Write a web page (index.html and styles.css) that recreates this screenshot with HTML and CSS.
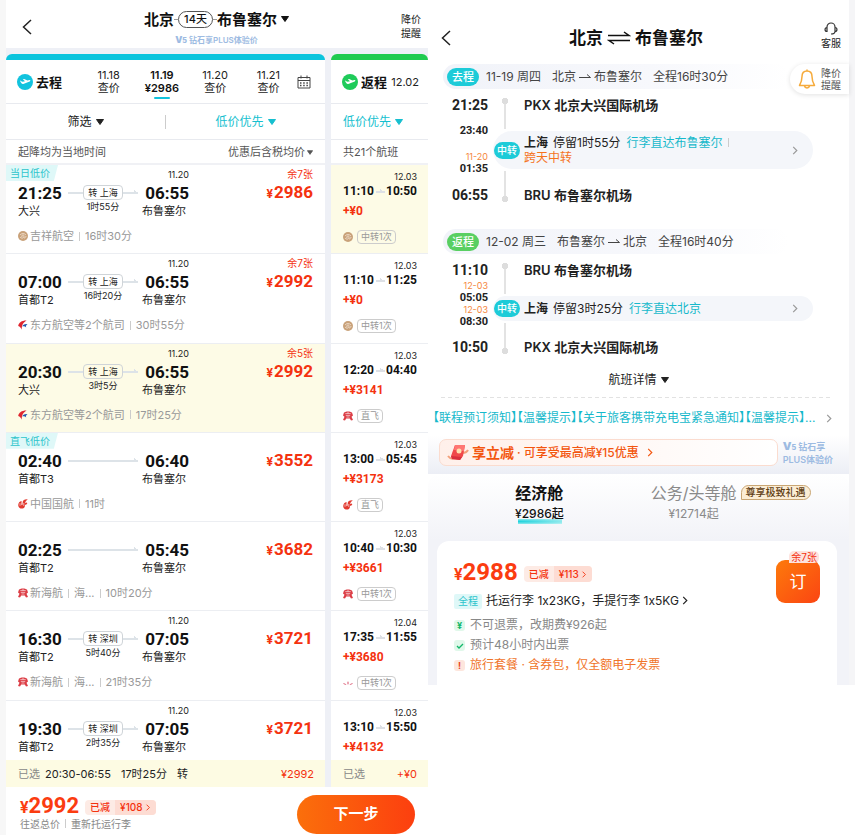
FILE: index.html
```
<!DOCTYPE html>
<html lang="zh-CN">
<head>
  <meta charset="UTF-8">
  <meta name="viewport" content="width=device-width, initial-scale=1.0">
  <title>北京-布鲁塞尔</title>
  <link rel="stylesheet" href="styles.css">
</head>
<body>
  <svg class="sprite" aria-hidden="true">
    <symbol id="juneyao" viewBox="0 0 10 10"><circle cx="5" cy="5" r="5" fill="#c9a27a"/><path d="M2 4c2-2 4-2 6 0M2 6c2 2 4 1 4-1S3 4 4 6M6 7c1 0 2-1 2-2" fill="none" stroke="#f6e9da" stroke-width=".8"/></symbol>
    <symbol id="ceair" viewBox="0 0 10 10"><path d="M8.600 .6C4 .4 .8 2.600 .2 6 2 6.600 3 8 4 9.800 3.400 6.200 4.500 3.200 8.600 .6z" fill="#e0262f"/><path d="M9.600 4C6.500 3.600 4.800 4.600 4.300 6.600 6 6 7 6.300 8.200 7.600 7.600 6.200 8 5 9.600 4z" fill="#2558ad"/></symbol>
    <symbol id="airchina" viewBox="0 0 10 10"><path d="M9.800 .2C6 0 4.400 1.400 4.600 4.600 4.600 6.400 3.600 6.600 3.400 5.400L3.600 2C1.600 2.200 .2 4 .2 6.200.4 8.800 2.600 10 4.800 9.500 6.800 9 7 7.200 7 6L9.200 5 9 3.600 7.200 4C7.200 2.600 8.200 1.600 9.800 .2z" fill="#e23a30"/><path d="M2 4.200v2.600M5.800 4v3" stroke="#fff" stroke-width=".6"/></symbol>
    <symbol id="hna" viewBox="0 0 10 10"><path d="M1 1.500C3 0 7 0 9 1.500L10 4.500 8.500 5.800 10 9 8 9.600 6.800 7.500H3.200L2 9.600 0 9 1.500 5.800 0 4.500z" fill="#dc3d45"/><path d="M2.300 2.600h5.400M2.800 4.400h4.400M3.500 6h3M5 1v1.500" stroke="#fff" stroke-width=".6"/></symbol>
    <symbol id="lotus" viewBox="0 0 10 10"><path d="M5 3l1 2-1 2-1-2zM0 5c1.500 0 2.500.5 3.500 2C2 7.200 1 6.500 0 5zM10 5c-1.500 0-2.500.5-3.500 2C8 7.200 9 6.500 10 5z" fill="#e58a9c"/></symbol>
    <symbol id="back" viewBox="0 0 10 16"><path d="M9 1L1.500 8 9 15" fill="none" stroke="#222" stroke-width="1.500"/></symbol>
    <symbol id="more" viewBox="0 0 6 10"><path d="M1 1l4 4-4 4" fill="none" stroke="currentColor" stroke-width="1.300"/></symbol>
    <symbol id="down" viewBox="0 0 8 6"><path d="M.5 .5h7L4 5.500z" fill="currentColor" stroke="currentColor" stroke-linejoin="round"/></symbol>
    <symbol id="plane" viewBox="0 0 16 16"><circle cx="8" cy="8" r="8" fill="currentColor"/><path d="M3 6.600c1 .3 1.600 1 2.700 1.200L8 7.300 5.800 5.200l1.300-.3 3.400 1.600 1.900-.5c1.200-.2 1.300 1 .3 1.400L6.300 10c-1.500.4-2.800-1.600-3.300-3.400z" fill="#fff"/></symbol>
  </svg>

  <!-- 航班列表 -->
  <div class="list-page">
    <header class="list-header">
      <button class="icon-btn" aria-label="返回"><svg class="back"><use href="#back"/></svg></button>
      <div class="route">
        <button class="route-title">北京<i class="dash"></i><span class="days">14天</span><i class="dash"></i>布鲁塞尔<svg class="down"><use href="#down"/></svg></button>
        <p class="plus"><b>V<small>5</small></b> 钻石享PLUS体验价</p>
      </div>
      <button class="remind">降价<br>提醒</button>
    </header>

    <div class="columns">
      <section class="col col-go">
        <div class="dates">
          <h2><svg class="plane"><use href="#plane"/></svg>去程</h2>
          <div class="days-tabs">
            <button>11.18<br>查价</button>
            <button class="active">11.19<br>¥2986</button>
            <button>11.20<br>查价</button>
            <button>11.21<br>查价</button>
          </div>
          <button class="icon-btn" aria-label="日历">
            <svg class="calendar" viewBox="0 0 14 14"><path d="M1 2.500h12v10.500H1zM1 5.500h12M4 .5v3M10 .5v3" fill="none" stroke="#444"/><path d="M3 8h8M3 10.500h8" stroke="#444" stroke-width="1.300" stroke-dasharray="1.500 1.700"/></svg>
          </button>
        </div>
        <div class="filters">
          <button>筛选<svg class="down"><use href="#down"/></svg></button>
          <button class="on">低价优先<svg class="down"><use href="#down"/></svg></button>
        </div>
        <div class="notes"><span>起降均为当地时间</span><button>优惠后含税均价<svg class="down"><use href="#down"/></svg></button></div>
        <ul class="flights">
          <li class="flight">
            <span class="tag">当日低价</span>
            <span class="date">11.20</span>
            <b class="time dep">21:25</b>
            <div class="via"><span>转 上海</span><small>1时55分</small></div>
            <b class="time arr">06:55</b>
            <span class="from">大兴</span><span class="to">布鲁塞尔</span>
            <p class="price"><small>余7张</small><b><i>¥</i>2986</b></p>
            <p class="airline"><svg><use href="#juneyao"/></svg>吉祥航空<i class="bar"></i>16时30分</p>
          </li>
          <li class="flight">
            <span class="date">11.20</span>
            <b class="time dep">07:00</b>
            <div class="via"><span>转 上海</span><small>16时20分</small></div>
            <b class="time arr">06:55</b>
            <span class="from">首都T2</span><span class="to">布鲁塞尔</span>
            <p class="price"><small>余7张</small><b><i>¥</i>2992</b></p>
            <p class="airline"><svg><use href="#ceair"/></svg>东方航空等2个航司<i class="bar"></i>30时55分</p>
          </li>
          <li class="flight selected">
            <span class="date">11.20</span>
            <b class="time dep">20:30</b>
            <div class="via"><span>转 上海</span><small>3时5分</small></div>
            <b class="time arr">06:55</b>
            <span class="from">大兴</span><span class="to">布鲁塞尔</span>
            <p class="price"><small>余5张</small><b><i>¥</i>2992</b></p>
            <p class="airline"><svg><use href="#ceair"/></svg>东方航空等2个航司<i class="bar"></i>17时25分</p>
          </li>
          <li class="flight">
            <span class="tag">直飞低价</span>
            <b class="time dep">02:40</b>
            <div class="via"></div>
            <b class="time arr">06:40</b>
            <span class="from">首都T3</span><span class="to">布鲁塞尔</span>
            <p class="price"><b><i>¥</i>3552</b></p>
            <p class="airline"><svg><use href="#airchina"/></svg>中国国航<i class="bar"></i>11时</p>
          </li>
          <li class="flight">
            <b class="time dep">02:25</b>
            <div class="via"></div>
            <b class="time arr">05:45</b>
            <span class="from">首都T2</span><span class="to">布鲁塞尔</span>
            <p class="price"><b><i>¥</i>3682</b></p>
            <p class="airline"><svg><use href="#hna"/></svg>新海航<i class="bar"></i>海...<i class="bar"></i>10时20分</p>
          </li>
          <li class="flight">
            <span class="date">11.20</span>
            <b class="time dep">16:30</b>
            <div class="via"><span>转 深圳</span><small>5时40分</small></div>
            <b class="time arr">07:05</b>
            <span class="from">首都T2</span><span class="to">布鲁塞尔</span>
            <p class="price"><b><i>¥</i>3721</b></p>
            <p class="airline"><svg><use href="#hna"/></svg>新海航<i class="bar"></i>海...<i class="bar"></i>21时35分</p>
          </li>
          <li class="flight">
            <span class="date">11.20</span>
            <b class="time dep">19:30</b>
            <div class="via"><span>转 深圳</span><small>2时35分</small></div>
            <b class="time arr">07:05</b>
            <span class="from">首都T2</span><span class="to">布鲁塞尔</span>
            <p class="price"><b><i>¥</i>3721</b></p>
          </li>
        </ul>
        <div class="chosen"><span>已选</span><b>20:30-06:55</b><b>17时25分</b><b>转</b><em>¥2992</em></div>
      </section>

      <section class="col col-back">
        <div class="dates">
          <h2><svg class="plane"><use href="#plane"/></svg>返程</h2>
          <span class="back-date">12.02</span>
        </div>
        <div class="filters">
          <button class="on">低价优先<svg class="down"><use href="#down"/></svg></button>
        </div>
        <div class="notes"><span>共21个航班</span></div>
        <ul class="flights">
          <li class="return selected">
            <span class="date">12.03</span>
            <div class="times"><b>11:10</b><i></i><b>10:50</b></div>
            <p class="extra">+¥0</p>
            <p class="airline"><svg><use href="#juneyao"/></svg><span>中转1次</span></p>
          </li>
          <li class="return">
            <span class="date">12.03</span>
            <div class="times"><b>11:10</b><i></i><b>11:25</b></div>
            <p class="extra">+¥0</p>
            <p class="airline"><svg><use href="#juneyao"/></svg><span>中转1次</span></p>
          </li>
          <li class="return">
            <span class="date">12.03</span>
            <div class="times"><b>12:20</b><i></i><b>04:40</b></div>
            <p class="extra">+¥3141</p>
            <p class="airline"><svg><use href="#hna"/></svg><span>直飞</span></p>
          </li>
          <li class="return">
            <span class="date">12.03</span>
            <div class="times"><b>13:00</b><i></i><b>05:45</b></div>
            <p class="extra">+¥3173</p>
            <p class="airline"><svg><use href="#airchina"/></svg><span>直飞</span></p>
          </li>
          <li class="return">
            <span class="date">12.03</span>
            <div class="times"><b>10:40</b><i></i><b>10:30</b></div>
            <p class="extra">+¥3661</p>
            <p class="airline"><svg><use href="#hna"/></svg><span>中转1次</span></p>
          </li>
          <li class="return">
            <span class="date">12.04</span>
            <div class="times"><b>17:35</b><i></i><b>11:55</b></div>
            <p class="extra">+¥3680</p>
            <p class="airline"><svg><use href="#lotus"/></svg><span>中转1次</span></p>
          </li>
          <li class="return">
            <span class="date">12.03</span>
            <div class="times"><b>13:10</b><i></i><b>15:50</b></div>
            <p class="extra">+¥4132</p>
          </li>
        </ul>
        <div class="chosen"><span>已选</span><em>+¥0</em></div>
      </section>
    </div>

    <footer class="pay">
      <div>
        <div class="total"><b class="num"><i>¥</i>2992</b><button class="cut"><span>已减</span><span>¥108<svg class="more"><use href="#more"/></svg></span></button></div>
        <p>往返总价<i class="bar"></i>重新托运行李</p>
      </div>
      <button class="next">下一步</button>
    </footer>
  </div>

  <!-- 航班详情 -->
  <div class="detail-page">
    <header class="detail-header">
      <button class="icon-btn" aria-label="返回"><svg class="back"><use href="#back"/></svg></button>
      <h1>北京<svg class="swap" viewBox="0 0 24 14"><path d="M1 4.500h21L17 1M23 9.500H2L7 13" fill="none" stroke="#111" stroke-width="1.500"/></svg>布鲁塞尔</h1>
      <button class="service"><svg viewBox="0 0 14 14"><path d="M3 10V6a4 4 0 0 1 8 0v4M3 6.500c-2.600 0-2.600 4 0 4zM11 6.500c2.600 0 2.600 4 0 4zM11 10.500c0 1.500-1.500 2.500-4 2.500" fill="none" stroke="#333" stroke-width="1.200"/></svg>客服</button>
    </header>
    <button class="bell">
      <svg viewBox="0 0 18 20"><path d="M9 2C5.500 2 4 4.500 4 7.500 4 12 3 14 1.500 16.500h15C15 14 14 12 14 7.500 14 4.500 12.500 2 9 2zM9 .5V2M6.500 17c.5 2.500 4.500 2.500 5 0" fill="none" stroke="#f6ab3c" stroke-width="1.500" stroke-linejoin="round"/></svg>
      <span>降价<br>提醒</span>
    </button>

    <section class="leg">
      <h2 class="leg-title"><span class="badge">去程</span><span>11-19 周四</span><span>北京<svg class="to-arrow" viewBox="0 0 12 6"><path d="M0 4.500h11.500L8 1.500" fill="none" stroke="#444"/></svg>布鲁塞尔</span><span>全程16时30分</span></h2>
      <div class="leg-body">
        <div class="leg-times">
          <b>21:25</b>
          <div class="mid split"><span>23:40</span><em>11-20</em><span>01:35</span></div>
          <b>06:55</b>
        </div>
        <div class="leg-stops">
          <div class="stop"><i class="rail"></i><b>PKX 北京大兴国际机场</b></div>
          <div class="transfer">
            <span class="badge">中转</span>
            <p class="transfer-text"><b>上海</b>停留1时55分<a href="#luggage">行李直达布鲁塞尔</a><i class="bar"></i><br><em>跨天中转</em></p>
            <svg class="more"><use href="#more"/></svg>
          </div>
          <div class="stop last"><i class="rail"></i><b>BRU 布鲁塞尔机场</b></div>
        </div>
      </div>
    </section>

    <section class="leg leg-return">
      <h2 class="leg-title"><span class="badge green">返程</span><span>12-02 周三</span><span>布鲁塞尔<svg class="to-arrow" viewBox="0 0 12 6"><path d="M0 4.500h11.500L8 1.500" fill="none" stroke="#444"/></svg>北京</span><span>全程16时40分</span></h2>
      <div class="leg-body">
        <div class="leg-times">
          <b>11:10</b>
          <div class="mid"><em>12-03</em><span>05:05</span><em>12-03</em><span>08:30</span></div>
          <b>10:50</b>
        </div>
        <div class="leg-stops">
          <div class="stop"><i class="rail"></i><b>BRU 布鲁塞尔机场</b></div>
          <div class="transfer">
            <span class="badge">中转</span>
            <p class="transfer-text"><b>上海</b>停留3时25分<a href="#luggage">行李直达北京</a></p>
            <svg class="more"><use href="#more"/></svg>
          </div>
          <div class="stop last"><i class="rail"></i><b>PKX 北京大兴国际机场</b></div>
        </div>
      </div>
    </section>

    <button class="unfold">航班详情<svg class="down"><use href="#down"/></svg></button>
    <a class="notice" href="#notice"><span>【联程预订须知】【温馨提示】【关于旅客携带充电宝紧急通知】【温馨提示】...</span><svg class="more"><use href="#more"/></svg></a>

    <div class="promo">
      <button class="promo-box">
        <svg class="gift" viewBox="0 0 22 18"><path d="M1 12c3 4 6 3 8 1M15 9c3 0 5-1 6-3" fill="none" stroke="#f3a07a" stroke-width="2"/><path d="M8 1h10l-2 11-3 4-8-1-1-3z" fill="#f0484a"/><path d="M8 1h10l-1 6-10-1z" fill="#ff7773"/><path d="M4 12l11 1-2 3-8-1z" fill="#d92f3c"/><circle cx="12" cy="7" r="2.500" fill="#ffe0b0"/></svg>
        <b>享立减</b><span>·</span><span>可享受最高减¥15优惠</span><svg class="more"><use href="#more"/></svg>
      </button>
      <p class="plus"><b>V<small>5</small></b> 钻石享<br>PLUS体验价</p>
    </div>

    <section class="cabin">
      <div class="tabs">
        <button class="tab active"><b>经济舱</b><span>¥2986起</span></button>
        <button class="tab"><b>公务/头等舱</b><span>¥12714起</span></button>
        <span class="gold">尊享极致礼遇</span>
      </div>
      <div class="card">
        <div class="fare">
          <div class="total"><b class="num"><i>¥</i>2988</b><button class="cut"><span>已减</span><span>¥113<svg class="more"><use href="#more"/></svg></span></button></div>
          <p class="bags"><span class="all">全程</span><a href="#bags">托运行李 1x23KG，手提行李 1x5KG<svg class="more"><use href="#more"/></svg></a></p>
          <p class="rule"><i>¥</i>不可退票，改期费¥926起</p>
          <p class="rule"><i><svg viewBox="0 0 8 8"><path d="M1 4l2 2 4-4" fill="none" stroke="#12b76a" stroke-width="1.300"/></svg></i>预计48小时内出票</p>
          <p class="rule warn"><i>!</i>旅行套餐 · 含券包，仅全额电子发票</p>
        </div>
        <button class="order">订<small>余7张</small></button>
      </div>
    </section>
  </div>
</body>
</html>
```
FILE: styles.css
```
*{
  box-sizing: border-box;
  margin: 0;
  padding: 0;
}
body{
  display: flex;
  align-items: flex-start;
  background: #fff;
  color: #222;
  font: 11px/14px Inter, "Noto Sans CJK SC", sans-serif;
}
button{
  border: 0;
  background: none;
  color: inherit;
  font: inherit;
  cursor: pointer;
}
a{
  color: inherit;
  text-decoration: none;
}
i, em{
  font-style: normal;
}
ul{
  list-style: none;
}
.sprite{
  position: absolute;
  width: 0;
  height: 0;
}
.back{
  display: block;
  width: 10px;
  height: 16px;
}
.down{
  width: 8px;
  height: 6px;
  margin: 0 0 1px 4px;
}
.more{
  width: 6px;
  height: 9px;
  flex: none;
}
.bar{
  display: inline-block;
  width: 1px;
  height: 9px;
  margin: 0 5px;
  background: #ccc;
}
.plus{
  color: #9dbbe2;
  font-size: 9px;
  line-height: 12px;
  font-weight: 600;
}
.plus b{
  font-size: 11px;
}
.plus small{
  font-size: 7px;
}
.num, .time, .times b, .price b, .extra, .leg-times b, .leg-times span{
  font-family: Roboto, "Noto Sans CJK SC", sans-serif;
}

/* 列表页 */
.list-page{
  flex: 428 1 0;
  min-width: 0;
  height: 100vh;
  min-height: 835px;
  display: flex;
  flex-direction: column;
  border-left: 6px solid #f7f7f7;
}
.list-header{
  height: 48px;
  flex: none;
  display: flex;
  align-items: center;
  justify-content: space-between;
  padding: 0 7px 0 16px;
}
.list-header .icon-btn{
  padding-top: 6px;
}
.route{
  display: flex;
  flex-direction: column;
  align-items: center;
  padding-top: 4px;
}
.route .plus{
  font-size: 8px;
}
.route .plus b{
  font-size: 9px;
}
.route-title{
  display: flex;
  align-items: center;
  font-size: 15px;
  line-height: 28px;
  font-weight: 700;
  color: #111;
}
.dash{
  width: 4px;
  height: 1px;
  background: #999;
}
.days{
  padding: 0 5px;
  border: 1px solid #555;
  border-radius: 9px;
  font-size: 11px;
  line-height: 15px;
  font-weight: 500;
}
.remind{
  padding-top: 4px;
  font-size: 10px;
}
.columns{
  flex: 1;
  min-height: 0;
  display: flex;
  gap: 6px;
  padding-top: 6px;
  background: #eef0f6;
}
.col{
  min-width: 0;
  display: flex;
  flex-direction: column;
  border-top: 6px solid #0bc4dd;
  border-radius: 6px 6px 0 0;
  background: #fff;
}
.col-go{
  flex: 319 1 0;
}
.col-back{
  flex: 97 1 0;
  border-top-color: #1fcb4f;
}
.dates, .filters, .notes{
  flex: none;
  display: flex;
  align-items: center;
  border-bottom: 1px solid #e8eaef;
}
.dates{
  height: 44px;
  padding: 0 14px 0 11px;
}
.dates h2{
  display: flex;
  align-items: center;
  gap: 3px;
  font-size: 13px;
  font-weight: 600;
  color: #111;
}
.plane{
  width: 16px;
  height: 16px;
  color: #12c3de;
}
.col-back .plane{
  color: #1fcb5a;
}
.days-tabs{
  flex: 1;
  display: flex;
  padding: 0 2px 0 20px;
}
.days-tabs button{
  flex: 1;
  line-height: 13px;
}
.days-tabs .active{
  position: relative;
  font-weight: 600;
  color: #111;
}
.days-tabs .active::after{
  content: "";
  position: absolute;
  left: calc(50% - 8px);
  bottom: -4px;
  width: 16px;
  height: 2px;
  border-radius: 1px;
  background: #12c3de;
}
.calendar{
  display: block;
  width: 14px;
  height: 14px;
}
.col-back .dates{
  justify-content: space-between;
  padding-right: 9px;
}
.filters{
  height: 36px;
  font-size: 12px;
}
.filters button{
  flex: 1;
}
.filters button + button{
  border-left: 1px solid #ccc;
}
.filters .on{
  color: #16bfcf;
}
.col-back .filters{
  padding-left: 12px;
}
.col-back .filters button{
  text-align: left;
}
.notes{
  height: 25px;
  justify-content: space-between;
  padding: 0 12px;
  border-bottom: 2px solid #f0f1f5;
  color: #555;
}
.notes .down{
  width: 6px;
  height: 5px;
  margin-left: 2px;
}
.flights{
  flex: 1;
  min-height: 0;
  overflow: hidden;
  display: grid;
  grid-auto-rows: 15%;
}
.flight, .return{
  position: relative;
  border-bottom: 1px solid #eceef2;
  padding: 4px 12px 0;
}
.selected{
  background: #fdfbe6;
}
.flight{
  display: grid;
  grid-template-columns: 50px 70px 51px 1fr;
  grid-template-rows: 12px 24px 12px 1fr;
}
.tag{
  position: absolute;
  left: 0;
  top: 0;
  padding: 0 8px 0 4px;
  background: #dff8f8;
  clip-path: polygon(0 0, 100% 0, 92% 100%, 0 100%);
  color: #2cc4cc;
  font-size: 10px;
  line-height: 16px;
}
.date{
  grid-area: 1 / 3;
  text-align: right;
  font-size: 9px;
  line-height: 12px;
}
.time{
  font-size: 17px;
  line-height: 24px;
  color: #111;
}
.dep{
  grid-area: 2 / 1;
}
.arr{
  grid-area: 2 / 3;
  text-align: right;
}
.from{
  grid-area: 3 / 1;
  line-height: 12px;
}
.to{
  grid-area: 3 / 3;
  padding-left: 4px;
  line-height: 12px;
  white-space: nowrap;
}
.via{
  grid-area: 2 / 2 / 4 / 3;
  display: flex;
  flex-direction: column;
  align-items: center;
  padding-top: 4px;
  background:
    linear-gradient(to top right, #dde3e8 50%, transparent 50%) 66px 9px / 4px 3px no-repeat,
    linear-gradient(#dde3e8, #dde3e8) 0 11px / 70px 2px no-repeat;
}
.via span{
  padding: 0 4px;
  border: 1px solid #cfd4d8;
  border-radius: 4px;
  background: #fff;
  font-size: 9px;
  line-height: 13px;
}
.selected .via span{
  background: #fdfbe6;
}
.via small{
  font-size: 9px;
  line-height: 13px;
}
.price{
  grid-area: 1 / 4 / 3 / 5;
  display: flex;
  flex-direction: column;
  align-items: flex-end;
  justify-content: flex-end;
  color: #f4320f;
}
.price small{
  font-size: 10px;
  line-height: 14px;
}
.price b{
  font-size: 17px;
  line-height: 22px;
}
.price i{
  margin-right: 1px;
  font-size: 12px;
}
.airline{
  grid-area: 4 / 1 / 5 / 5;
  display: flex;
  align-items: center;
  padding-top: 2px;
  color: #999;
}
.flight .airline{
  height: 36px;
}
.airline svg{
  width: 10px;
  height: 10px;
  margin-right: 2px;
}
.return{
  display: flex;
  flex-direction: column;
  padding: 6px 11px 0 12px;
}
.times{
  display: flex;
  align-items: center;
  justify-content: space-between;
}
.times b{
  font-size: 12px;
  line-height: 16px;
  color: #111;
}
.times i{
  width: 9px;
  height: 4px;
  background:
    linear-gradient(to top right, #dde0e5 50%, transparent 50%) 4px 0 / 5px 3px no-repeat,
    linear-gradient(#dde0e5, #dde0e5) 0 2px / 9px 2px no-repeat;
}
.extra{
  padding-top: 3px;
  color: #f4320f;
  font-size: 12px;
  line-height: 18px;
  font-weight: 700;
}
.return .airline{
  height: 32px;
}
.airline span{
  margin-left: 2px;
  padding: 0 3px;
  border: 1px solid #ccc;
  border-radius: 4px;
  font-size: 9px;
  line-height: 12px;
}
.chosen{
  flex: none;
  height: 27px;
  display: flex;
  align-items: center;
  gap: 5px;
  padding: 0 11px 0 12px;
  background: #fdfbe3;
}
.chosen span{
  color: #888;
}
.chosen b{
  margin-right: 5px;
  font-weight: 400;
}
.chosen em{
  margin-left: auto;
  color: #f4320f;
}
.pay{
  flex: none;
  height: 48px;
  display: flex;
  align-items: center;
  justify-content: space-between;
  padding: 6px 13px 0 14px;
}
.pay p{
  color: #888;
  font-size: 10px;
  line-height: 14px;
}
.total{
  display: flex;
  align-items: center;
  gap: 6px;
}
.num{
  color: #fb3c10;
  font-size: 22px;
  line-height: 24px;
}
.num i{
  font-size: 16px;
}
.pay .total{
  height: 20px;
}
.cut{
  display: flex;
  border-radius: 4px;
  overflow: hidden;
  background: #fdebe5;
  color: #f4320f;
  font-size: 10px;
  line-height: 15px;
  font-weight: 500;
}
.cut span{
  padding: 0 5px;
}
.cut span + span{
  background: #fddcd3;
}
.cut .more{
  height: 7px;
  margin-left: 2px;
}
.next{
  width: 118px;
  height: 39px;
  border-radius: 20px;
  background: linear-gradient(90deg, #fb6f0b, #fc3f0f);
  color: #fff;
  font-size: 15px;
  font-weight: 600;
}

/* 详情页 */
.detail-page{
  position: relative;
  flex: 427 1 0;
  min-width: 0;
  border-right: 6px solid #f5f5f7;
}
.detail-header{
  height: 64px;
  display: flex;
  align-items: center;
  justify-content: space-between;
  padding: 12px 8px 0 13px;
}
.detail-header h1{
  display: flex;
  align-items: center;
  gap: 4px;
  font-size: 17px;
  line-height: 24px;
  color: #111;
}
.swap{
  width: 24px;
  height: 14px;
}
.service{
  padding-bottom: 6px;
  font-size: 10px;
  line-height: 12px;
}
.service svg{
  display: block;
  width: 14px;
  height: 14px;
  margin: 0 auto 2px;
}
.bell{
  position: absolute;
  top: 64px;
  right: 0;
  display: flex;
  align-items: center;
  gap: 5px;
  height: 30px;
  padding: 0 8px;
  border-radius: 15px 0 0 15px;
  background: #fff;
  box-shadow: 0 1px 5px rgba(0, 0, 0, .12);
  color: #555;
  font-size: 10px;
  line-height: 12px;
}
.bell svg{
  width: 18px;
  height: 20px;
}
.leg-return{
  margin-top: 20px;
}
.leg-title{
  display: flex;
  align-items: center;
  gap: 11px;
  height: 25px;
  margin: 0 60px 2px 15px;
  padding-left: 4px;
  border-radius: 13px;
  background: linear-gradient(90deg, #f1f3f9, #f7f8fc 60%, #fff);
  color: #444;
  font-size: 12px;
  font-weight: 400;
}
.badge{
  flex: none;
  padding: 0 3px;
  border-radius: 9px;
  background: #1dcbd8;
  color: #fff;
  font-size: 10px;
  line-height: 17px;
  font-weight: 500;
}
.leg-title .badge{
  padding: 0 5px;
  font-size: 11px;
  line-height: 18px;
  margin-right: -4px;
}
.leg-title .green{
  background: #59cf62;
}
.to-arrow{
  width: 12px;
  height: 6px;
  margin: 0 3px 2px;
}
.leg-body{
  display: flex;
}
.leg-times{
  width: 60px;
  display: flex;
  flex-direction: column;
  padding: 4px 0;
  text-align: right;
}
.leg-times b{
  font-size: 14px;
  line-height: 20px;
}
.leg-times b:last-child{
  margin-top: auto;
}
.mid{
  display: flex;
  flex-direction: column;
  line-height: 12px;
}
.mid span{
  font-size: 11px;
  font-weight: 700;
}
.mid em{
  color: #f5873d;
  font-size: 9px;
}
.split{
  padding-top: 10px;
}
.split em{
  margin-top: 14px;
}
.leg-stops{
  flex: 1;
  min-width: 0;
  padding-left: 5px;
}
.stop{
  display: flex;
  height: 38px;
}
.stop b{
  font-size: 13px;
  line-height: 28px;
  font-weight: 600;
}
.stop.last{
  align-items: flex-end;
}
.rail{
  align-self: stretch;
  width: 6px;
  margin: 7px 16px 0 9px;
  background: radial-gradient(circle at 3px 3px, #ddd 3px, transparent 3px), linear-gradient(#e3e3e3, #e3e3e3) 2px 3px / 2px 100% no-repeat;
}
.last .rail{
  margin-top: 0;
  margin-bottom: 7px;
  transform: rotate(180deg);
}
.transfer{
  display: flex;
  align-items: center;
  margin: 2px 36px 2px 0;
  padding: 4px 15px 4px 1px;
  border-radius: 20px;
  background: #f4f6fa;
  font-size: 12px;
  line-height: 15px;
}
.transfer-text{
  flex: 1;
  margin-left: 4px;
  white-space: nowrap;
}
.transfer-text b{
  margin-right: 5px;
  font-weight: 600;
}
.transfer a{
  margin-left: 6px;
  color: #16b9cb;
}
.transfer em{
  color: #f5731d;
}
.transfer .more, .notice .more{
  color: #999;
}
.unfold{
  display: block;
  margin: 9px auto 7px;
  font-size: 12px;
  line-height: 20px;
}
.notice{
  display: flex;
  align-items: center;
  justify-content: space-between;
  margin: 0 17px 0 0;
  padding: 11px 0 7px 5px;
  background: repeating-linear-gradient(90deg, #e2e2e2 0 4px, transparent 4px 7px) 13px 0 / 100% 1px no-repeat;
  color: #16b9cb;
  font-size: 12px;
  line-height: 20px;
}
.notice span{
  font-feature-settings: "halt";
  white-space: nowrap;
}
.promo{
  display: flex;
  align-items: center;
  gap: 5px;
  padding: 4px 16px 8px 11px;
  background: linear-gradient(#fff, #eceef5);
}
.promo-box{
  flex: 1;
  display: flex;
  align-items: center;
  gap: 3px;
  height: 27px;
  padding-left: 7px;
  border: 1px solid #fbdccf;
  border-radius: 7px;
  background: linear-gradient(90deg, #fff0ea, #fff);
  color: #f3560f;
  font-size: 12px;
  font-weight: 500;
}
.promo-box b{
  font-size: 14px;
}
.promo-box .more{
  margin-left: 5px;
}
.gift{
  width: 22px;
  height: 18px;
}
.cabin{
  padding: 0 12px 0 9px;
  border-radius: 12px 12px 0 0;
  background: linear-gradient(#fff, #f2f3f8 66px);
}
.tabs{
  display: flex;
  height: 67px;
  padding-top: 8px;
}
.tab{
  display: flex;
  flex-direction: column;
  align-items: center;
  color: #8a8a8a;
  font-size: 12px;
}
.tab b{
  font-size: 16px;
  line-height: 22px;
  font-weight: 400;
}
.tab span{
  line-height: 20px;
}
.tab.active{
  margin: 0 87px 0 78px;
  color: #111;
}
.active b{
  font-weight: 600;
}
.active span{
  font-weight: 500;
  background: radial-gradient(ellipse at left, #1fd2dc, #bdf3f4) 3px 15px / 44px 5px no-repeat;
}
.gold{
  align-self: flex-start;
  margin: 3px 0 0 4px;
  padding: 0 4px;
  border: 1px solid #c9a674;
  border-radius: 8px 8px 8px 0;
  background: #fbedd5;
  color: #5e3c12;
  font-size: 10px;
  line-height: 13px;
  font-weight: 500;
  white-space: nowrap;
}
.card{
  display: flex;
  align-items: flex-start;
  justify-content: space-between;
  padding: 16px 17px 10px;
  border-radius: 12px 12px 0 0;
  background: #fff;
}
.card .num{
  font-size: 24px;
  line-height: 30px;
}
.card .cut{
  line-height: 16px;
}
.bags{
  display: flex;
  align-items: center;
  gap: 4px;
  margin-bottom: 3px;
  font-size: 12px;
  line-height: 22px;
  color: #222;
}
.bags .more{
  margin-left: 3px;
}
.all{
  padding: 0 4px;
  border-radius: 2px;
  background: #dff8f8;
  color: #2cc4cc;
  font-size: 10px;
  line-height: 15px;
}
.rule{
  display: flex;
  align-items: center;
  gap: 5px;
  color: #888;
  font-size: 12px;
  line-height: 20px;
}
.rule i{
  width: 11px;
  height: 11px;
  border-radius: 3px;
  background: #e0f8ea;
  color: #12b76a;
  font-size: 9px;
  line-height: 11px;
  font-weight: 700;
  text-align: center;
}
.rule svg{
  display: block;
  width: 8px;
  height: 8px;
  margin: 2px auto 0;
}
.rule.warn{
  color: #f0742a;
}
.warn i{
  background: #fde6dd;
  color: #e8431a;
}
.order{
  position: relative;
  width: 44px;
  height: 43px;
  margin-top: 3px;
  border-radius: 9px;
  background: linear-gradient(135deg, #fd7a0c, #fb4512);
  color: #fff;
  font-size: 17px;
}
.order small{
  position: absolute;
  top: -9px;
  right: 1px;
  padding: 0 2px;
  border-radius: 5px 5px 5px 0;
  background: #fde3df;
  color: #f4320f;
  font-size: 10px;
  line-height: 12px;
  white-space: nowrap;
}
```
